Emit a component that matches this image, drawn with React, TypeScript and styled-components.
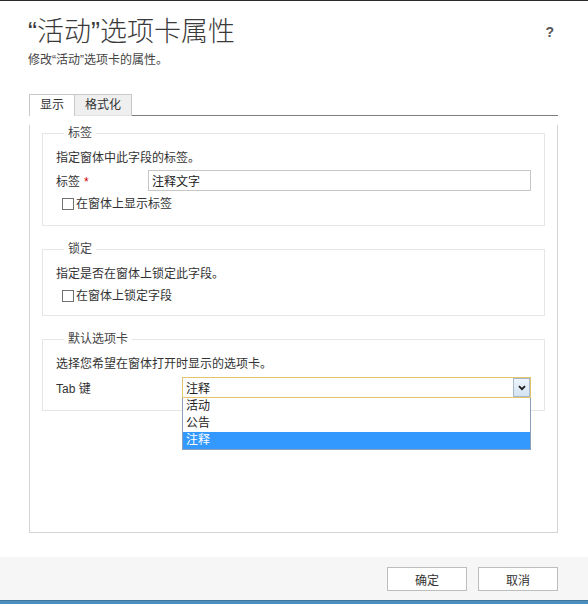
import React from 'react';
import styled, { createGlobalStyle } from 'styled-components';

const GlobalStyle = createGlobalStyle`
  html, body {
    margin: 0;
    padding: 0;
    background: #fff;
  }
  body {
    font-family: "Liberation Sans", "Noto Sans CJK SC", sans-serif;
    font-size: 12px;
    color: #333;
  }
  * {
    box-sizing: border-box;
  }
`;

const Page = styled.div`
  width: 588px;
  height: 604px;
  display: flex;
  flex-direction: column;
  border-top: 1px solid #2b2b2b;
  overflow: hidden;
`;

const Header = styled.div`
  display: flex;
  justify-content: space-between;
  align-items: flex-start;
  padding: 15px 34px 0 28px;
`;

const Title = styled.h1`
  margin: 0;
  font-size: 27px;
  line-height: 33px;
  font-weight: 300;
  color: #3a3a3a;
`;

const Subtitle = styled.div`
  margin-top: 3px;
  line-height: 16px;
  color: #444;
`;

const Help = styled.div`
  margin-top: 8px;
  font-size: 14px;
  font-weight: bold;
  color: #555;
`;

const Content = styled.div`
  margin: 26px 30px 0 29px;
`;

const TabStrip = styled.div`
  display: flex;
  height: 22px;
`;

const Tab = styled.div<{ $active?: boolean }>`
  height: 22px;
  padding: 0 10px;
  line-height: 21px;
  border: 1px solid #c8c8c8;
  border-bottom: ${({ $active }) => ($active ? 'none' : '1px solid #e0e0e0')};
  margin-left: ${({ $active }) => ($active ? '0' : '-1px')};
  background: ${({ $active }) => ($active ? '#fff' : '#efefef')};
  color: #333;
`;

const TabFiller = styled.div`
  flex: 1;
  border-bottom: 1px solid #7f7f7f;
`;

const Panel = styled.div`
  height: 408px;
  padding: 0 12px;
  border: 1px solid #d4d4d4;
  border-top: none;
`;

const Group = styled.fieldset<{ $bottom?: number }>`
  margin: 15px 0 0;
  padding: 0 13px ${({ $bottom }) => $bottom ?? 13}px;
  min-width: 0;
  border: 1px solid #e6e6e6;
  &:first-child {
    margin-top: 9px;
  }
`;

const Legend = styled.legend`
  margin-left: 8px;
  padding: 0 4px;
  line-height: 16px;
  color: #444;
`;

const Desc = styled.div`
  margin-top: 9px;
  line-height: 16px;
`;

const FieldRow = styled.div<{ $top?: number }>`
  display: flex;
  align-items: center;
  height: 21px;
  margin-top: ${({ $top }) => $top ?? 4}px;
`;

const FieldLabel = styled.div<{ $width: number }>`
  width: ${({ $width }) => $width}px;
  flex: none;
`;

const Required = styled.span`
  margin-left: 4px;
  color: #c00;
`;

const TextInput = styled.input`
  flex: 1;
  height: 21px;
  padding: 0 3px;
  border: 1px solid #c6c6c6;
  font: inherit;
  color: #222;
  outline: none;
`;

const CheckRow = styled.label<{ $top?: number }>`
  display: flex;
  align-items: center;
  gap: 2px;
  margin-top: ${({ $top }) => $top ?? 5}px;
  padding-left: 6px;
  line-height: 16px;
`;

const CheckBox = styled.input`
  appearance: none;
  width: 12px;
  height: 12px;
  margin: 0;
  border: 1px solid #707070;
  background: #fff;
`;

const SelectWrap = styled.div`
  position: relative;
  flex: 1;
  height: 21px;
`;

const SelectBox = styled.div`
  display: flex;
  align-items: center;
  height: 21px;
  padding-left: 3px;
  border: 1px solid #e1c46b;
  color: #222;
`;

const ArrowButton = styled.div`
  margin-left: auto;
  width: 17px;
  height: 100%;
  display: flex;
  align-items: center;
  justify-content: center;
  border: 1px solid #a7b9cb;
  background: linear-gradient(#edf4fc, #d5e3f2);
`;

const DropList = styled.div`
  position: absolute;
  top: 21px;
  left: 0;
  right: 0;
  z-index: 2;
  background: #fff;
  border: 1px solid #8aa0b8;
  border-top: none;
`;

const Option = styled.div<{ $selected?: boolean }>`
  height: 17px;
  line-height: 17px;
  padding-left: 3px;
  background: ${({ $selected }) => ($selected ? '#3399ff' : '#fff')};
  color: ${({ $selected }) => ($selected ? '#fff' : '#222')};
`;

const Footer = styled.div`
  margin-top: auto;
  height: 43px;
  flex: none;
  display: flex;
  justify-content: flex-end;
  align-items: flex-start;
  gap: 11px;
  padding: 10px 30px 0 0;
  background: #f6f6f6;
`;

const Button = styled.button`
  width: 80px;
  height: 24px;
  padding: 0;
  border: 1px solid #bdbdbd;
  background: #fff;
  font: inherit;
  color: #333;
`;

const BottomBar = styled.div`
  height: 4px;
  flex: none;
  background: #4f8fbf;
  border-top: 1px solid #3d75a1;
`;

const Chevron = () => (
  <svg width="8" height="6" viewBox="0 0 8 6">
    <path d="M1 1.2 L4 4.2 L7 1.2" fill="none" stroke="#1a1a1a" strokeWidth="1.8" />
  </svg>
);

const options = ['活动', '公告', '注释'];

export default function App(): JSX.Element {
  return (
    <Page>
      <GlobalStyle />
      <Header>
        <div>
          <Title>“活动”选项卡属性</Title>
          <Subtitle>修改“活动”选项卡的属性。</Subtitle>
        </div>
        <Help>?</Help>
      </Header>
      <Content>
        <TabStrip>
          <Tab $active>显示</Tab>
          <Tab>格式化</Tab>
          <TabFiller />
        </TabStrip>
        <Panel>
          <Group>
            <Legend>标签</Legend>
            <Desc>指定窗体中此字段的标签。</Desc>
            <FieldRow>
              <FieldLabel $width={92}>
                标签<Required>*</Required>
              </FieldLabel>
              <TextInput type='text' defaultValue='注释文字' />
            </FieldRow>
            <CheckRow>
              <CheckBox type='checkbox' />
              在窗体上显示标签
            </CheckRow>
          </Group>
          <Group $bottom={11}>
            <Legend>锁定</Legend>
            <Desc>指定是否在窗体上锁定此字段。</Desc>
            <CheckRow $top={6}>
              <CheckBox type='checkbox' />
              在窗体上锁定字段
            </CheckRow>
          </Group>
          <Group $bottom={12}>
            <Legend>默认选项卡</Legend>
            <Desc>选择您希望在窗体打开时显示的选项卡。</Desc>
            <FieldRow $top={5}>
              <FieldLabel $width={126}>Tab 键</FieldLabel>
              <SelectWrap>
                <SelectBox>
                  注释
                  <ArrowButton>
                    <Chevron />
                  </ArrowButton>
                </SelectBox>
                <DropList>
                  {options.map((o) => (
                    <Option key={o} $selected={o === '注释'}>
                      {o}
                    </Option>
                  ))}
                </DropList>
              </SelectWrap>
            </FieldRow>
          </Group>
        </Panel>
      </Content>
      <Footer>
        <Button>确定</Button>
        <Button>取消</Button>
      </Footer>
      <BottomBar />
    </Page>
  );
}
